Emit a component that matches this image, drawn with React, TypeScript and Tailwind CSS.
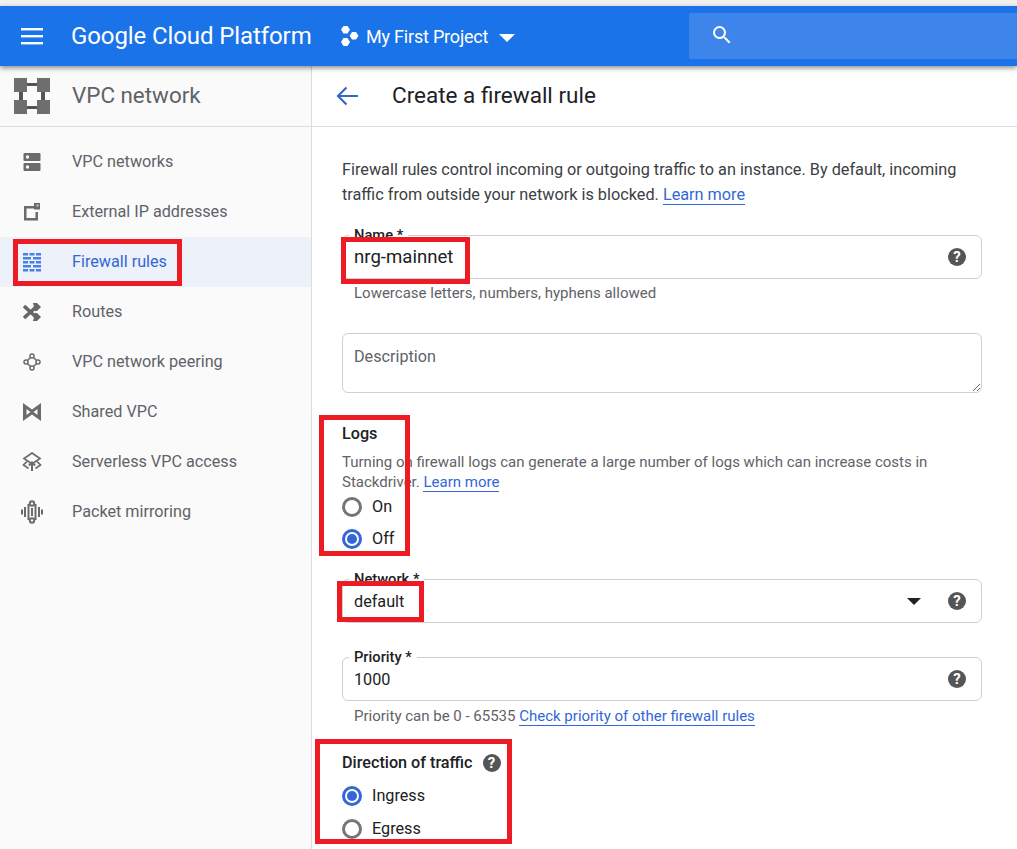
const font = { fontFamily: "Roboto, sans-serif" };

function Menu() {
  return (
    <svg width="24" height="18" viewBox="0 0 24 18" fill="#fff">
      <rect x="1" y="1" width="22" height="2.4" />
      <rect x="1" y="8" width="22" height="2.4" />
      <rect x="1" y="15" width="22" height="2.4" />
    </svg>
  );
}

function Hexes() {
  return (
    <svg width="20" height="22" viewBox="0 0 20 22" fill="#fff">
      <path d="M3.500 1h4L10 4.500 7.500 8.500h-4L1 4.500z" />
      <path d="M12 7h4l2.500 3.700L16 14.500h-4l-2.300-3.800z" />
      <path d="M3.500 13h4l2.500 4-2.500 4h-4L1 17z" />
    </svg>
  );
}

function SearchIcon() {
  return (
    <svg width="24" height="24" viewBox="0 0 24 24" fill="#fff">
      <path d="M15.500 14h-.79l-.28-.27A6.471 6.471 0 0 0 16 9.500 6.500 6.500 0 1 0 9.500 16c1.610 0 3.090-.59 4.230-1.570l.27.28v.79l5 4.990L20.490 19l-4.990-5zm-6 0C7.010 14 5 11.990 5 9.500S7.010 5 9.500 5 14 7.010 14 9.500 11.990 14 9.500 14z" />
    </svg>
  );
}

function VpcLogo() {
  return (
    <svg width="36" height="36" viewBox="0 0 36 36" fill="#6e6e6e">
      <rect x="0" y="0" width="13" height="14" />
      <rect x="23" y="0" width="13" height="14" />
      <rect x="0" y="22" width="13" height="14" />
      <rect x="23" y="22" width="13" height="14" />
      <rect x="13" y="5" width="10" height="3" fill="#555" />
      <rect x="13" y="28" width="10" height="3" fill="#555" />
      <rect x="5" y="14" width="4" height="8" fill="#555" />
      <rect x="27" y="14" width="4" height="8" fill="#555" />
    </svg>
  );
}

function NetworksIcon() {
  return (
    <svg width="18" height="20" viewBox="0 0 18 20" fill="#6b6b6b">
      <rect x="0.500" y="1" width="17" height="8" rx="1" />
      <rect x="0.500" y="11" width="17" height="8" rx="1" />
      <circle cx="4.500" cy="5" r="1.700" fill="#fafafa" />
      <circle cx="4.500" cy="15" r="1.700" fill="#fafafa" />
    </svg>
  );
}

function ExternalIpIcon() {
  return (
    <svg width="18" height="20" viewBox="0 0 18 20" fill="#6b6b6b">
      <path d="M1 4h10v2.500H3.500V16h9V10H15v8.500H1z" />
      <rect x="11" y="1" width="6" height="6.500" />
      <rect x="13.500" y="2.500" width="2" height="2" fill="#c9c9c9" />
    </svg>
  );
}

function FirewallIcon() {
  return (
    <svg width="18" height="20" viewBox="0 0 18 20" fill="#4a7fe6">
      <rect x="0" y="1" width="5" height="2.500" />
      <rect x="6.500" y="1" width="5" height="2.500" />
      <rect x="13" y="1" width="5" height="2.500" />
      <rect x="0" y="5" width="8" height="2.500" />
      <rect x="10" y="5" width="8" height="2.500" />
      <rect x="0" y="9" width="5" height="2.500" />
      <rect x="6.500" y="9" width="5" height="2.500" />
      <rect x="13" y="9" width="5" height="2.500" />
      <rect x="0" y="13" width="8" height="2.500" />
      <rect x="10" y="13" width="8" height="2.500" />
      <rect x="0" y="17" width="5" height="2.500" />
      <rect x="6.500" y="17" width="5" height="2.500" />
      <rect x="13" y="17" width="5" height="2.500" />
    </svg>
  );
}

function RoutesIcon() {
  return (
    <svg width="18" height="18" viewBox="0 0 18 18" fill="none" stroke="#666" strokeWidth="3.600">
      <path d="M1 3l12 11M1 15L13 4" />
      <path d="M10 0h4l4 4-4 4h-2zM10 18h4l4-4-4-4h-2z" fill="#666" stroke="none" />
    </svg>
  );
}

function PeeringIcon() {
  return (
    <svg width="18" height="18" viewBox="0 0 18 18" fill="none" stroke="#6b6b6b" strokeWidth="1.500">
      <circle cx="9" cy="3" r="2" />
      <circle cx="9" cy="15" r="2" />
      <circle cx="3" cy="9" r="2" />
      <circle cx="15" cy="9" r="2" />
      <path d="M7.500 4.500L4.500 7.500M10.500 4.500l3 3M4.500 10.500l3 3M13.500 10.500l-3 3" />
    </svg>
  );
}

function SharedIcon() {
  return (
    <svg width="18" height="18" viewBox="0 0 18 18" fill="#6b6b6b">
      <path d="M0 0l9 6.500L18 0v18l-9-6.500L0 18zM3.500 6v6l4-3zM14.500 6l-4 3 4 3z" fillRule="evenodd" />
    </svg>
  );
}

function ServerlessIcon() {
  return (
    <svg width="20" height="20" viewBox="0 0 20 20" fill="none" stroke="#6b6b6b" strokeWidth="1.700">
      <path d="M10 1l8 5.500-8 5.500-8-5.500z" />
      <path d="M5 9.500l-3.500 3.500 5 3.500M15 9.500l3.500 3.500-5 3.500" />
      <path d="M10 19v-8M7 13.500l3-3 3 3" strokeWidth="2" />
    </svg>
  );
}

function MirroringIcon() {
  return (
    <svg width="22" height="24" viewBox="0 0 22 24" fill="none" stroke="#6b6b6b" strokeWidth="2">
      <circle cx="11" cy="3.500" r="2.200" />
      <circle cx="11" cy="20.500" r="2.200" />
      <path d="M11 8v8M7.500 4v16M14.500 4v16M4 7v10M18 7v10M1 9.500v5M21 9.500v5" />
    </svg>
  );
}

function BackArrow() {
  return (
    <svg width="22" height="20" viewBox="0 0 22 20" fill="none" stroke="#3367d6" strokeWidth="2.200">
      <path d="M22 10H2M10.500 1.500L2 10l8.500 8.500" />
    </svg>
  );
}

function HelpIcon() {
  return (
    <span className="flex h-[18px] w-[18px] items-center justify-center rounded-full bg-[#555] text-[15px] font-bold leading-none text-white">
      ?
    </span>
  );
}

function Radio({ label, checked }: { label: string; checked?: boolean }) {
  return (
    <div className="flex h-[32px] items-center gap-[10px]">
      <span
        className={`flex h-[20px] w-[20px] items-center justify-center rounded-full border-[3px] ${
          checked ? "border-[#3367d6]" : "border-[#757575]"
        }`}
      >
        {checked && <span className="h-[10px] w-[10px] rounded-full bg-[#3367d6]" />}
      </span>
      <span className="text-[16.200px] text-[#202124]">{label}</span>
    </div>
  );
}

function Field({
  label,
  value,
  caret,
  large,
  className,
}: {
  label: string;
  value: string;
  caret?: boolean;
  large?: boolean;
  className: string;
}) {
  return (
    <div className={`relative flex h-[44px] w-[640px] items-center rounded-[6px] border border-[#cfcfcf] pl-[11px] pr-[15px] ${className}`}>
      <span className="absolute left-[6px] top-[-11px] bg-white px-[5px] text-[14.700px] font-medium leading-[20px] text-[#202124]">
        {label}
      </span>
      <span className={`flex-1 pt-[2px] text-[#202124] ${large ? "text-[18.600px]" : "text-[16.200px]"}`}>{value}</span>
      {caret && <span className="mr-[27px] h-0 w-0 border-x-[7px] border-t-[7px] border-x-transparent border-t-[#202124]" />}
      <HelpIcon />
    </div>
  );
}

const navItems = [
  { label: "VPC networks", icon: <NetworksIcon /> },
  { label: "External IP addresses", icon: <ExternalIpIcon /> },
  { label: "Firewall rules", icon: <FirewallIcon />, active: true },
  { label: "Routes", icon: <RoutesIcon /> },
  { label: "VPC network peering", icon: <PeeringIcon /> },
  { label: "Shared VPC", icon: <SharedIcon /> },
  { label: "Serverless VPC access", icon: <ServerlessIcon /> },
  { label: "Packet mirroring", icon: <MirroringIcon /> },
];

export default function App() {
  return (
    <div className="relative flex h-[849px] w-[1017px] flex-col overflow-hidden bg-white" style={font}>
      <div className="h-[6px] bg-[#f1f1f1]" />

      {/* top bar */}
      <header className="relative z-10 flex h-[60px] items-center bg-[#1a73e8] shadow-[0_2px_5px_rgba(0,0,0,0.45)]">
        <div className="ml-[20px] flex w-[24px]">
          <Menu />
        </div>
        <span className="ml-[27px] w-[241px] whitespace-nowrap text-[24px] tracking-[-0.1px] text-white">
          Google Cloud Platform
        </span>
        <div className="ml-[28px] flex w-[349px] items-center">
          <Hexes />
          <span className="ml-[6px] text-[18px] tracking-[-0.2px] text-white">My First Project</span>
          <span className="ml-[11px] mt-[3px] h-0 w-0 border-x-[8px] border-t-[8px] border-x-transparent border-t-white" />
        </div>
        <div className="flex h-[46px] flex-1 items-center rounded-l-[2px] bg-[#3d84eb] pb-[2px] pl-[21px]">
          <SearchIcon />
        </div>
      </header>

      <div className="flex flex-1">
        {/* sidebar */}
        <aside className="w-[312px] border-r border-[#dadce0] bg-[#fafafa]">
          <div className="flex h-[61px] items-center border-b border-[#dadce0] pl-[14px]">
            <VpcLogo />
            <span className="mb-[1px] ml-[22px] text-[22.400px] text-[#5f6368]">VPC network</span>
          </div>
          <nav className="pt-[10px]">
            {navItems.map((item) => (
              <div
                key={item.label}
                className={`flex h-[50px] items-center ${item.active ? "bg-[#edf1fa] text-[#3367d6]" : "text-[#5f6368]"}`}
              >
                <div className="flex w-[64px] justify-center">{item.icon}</div>
                <span className="ml-[8px] text-[16.200px]">{item.label}</span>
              </div>
            ))}
          </nav>
        </aside>

        {/* main */}
        <main className="flex-1">
          <div className="flex h-[61px] items-center border-b border-[#dadce0] pl-[24px]">
            <BackArrow />
            <h1 className="ml-[34px] text-[22.500px] text-[#202124]">Create a firewall rule</h1>
          </div>
          <div className="pl-[30px] pt-[30px]">
            <p className="w-[640px] text-[16.250px] leading-[25px] text-[#3c4043]">
              Firewall rules control incoming or outgoing traffic to an instance. By default, incoming
              traffic from outside your network is blocked.{" "}
              <a className="border-b border-[#3367d6] text-[#3367d6]">Learn more</a>
            </p>

            <Field label="Name *" value="nrg-mainnet" large className="mt-[28px]" />
            <p className="mt-[4px] pl-[12px] text-[15px] leading-[20px] text-[#5f6368]">
              Lowercase letters, numbers, hyphens allowed
            </p>

            <textarea
              placeholder="Description"
              className="mt-[30px] block h-[60px] w-[640px] rounded-[6px] border border-[#cfcfcf] px-[11px] py-[11px] text-[16.200px] leading-[24px] outline-none placeholder:text-[#5f6368]"
            />

            <h2 className="mt-[31px] text-[16.200px] font-medium leading-[20px] text-[#202124]">Logs</h2>
            <p className="mt-[8px] w-[640px] text-[15px] leading-[20px] text-[#5f6368]">
              Turning on firewall logs can generate a large number of logs which can increase costs in
              Stackdriver.{" "}
              <a className="border-b border-[#3367d6] text-[#3367d6]">Learn more</a>
            </p>
            <div className="-mt-[1px]">
              <Radio label="On" />
            </div>
            <Radio label="Off" checked />

            <Field label="Network *" value="default" caret className="mt-[24px]" />
            <Field label="Priority *" value="1000" className="mt-[34px]" />
            <p className="mt-[5px] pl-[12px] text-[15px] leading-[20px] text-[#5f6368]">
              Priority can be 0 - 65535{" "}
              <a className="border-b border-[#3367d6] text-[#3367d6]">Check priority of other firewall rules</a>
            </p>

            <div className="mt-[27px] flex items-center gap-[10px]">
              <h2 className="text-[16.200px] font-medium leading-[20px] text-[#202124]">Direction of traffic</h2>
              <HelpIcon />
            </div>
            <div className="mt-[7px]">
              <Radio label="Ingress" checked />
              <div className="mt-[1px]">
                <Radio label="Egress" />
              </div>
            </div>
          </div>
        </main>
      </div>

      {/* red annotation boxes drawn over the screenshot */}
      <div className="absolute left-[13px] top-[239px] z-20 h-[47px] w-[169px] border-[5px] border-[#ed1c24]" />
      <div className="absolute left-[341px] top-[237px] z-20 h-[47px] w-[129px] border-[5px] border-[#ed1c24]" />
      <div className="absolute left-[319px] top-[415px] z-20 h-[141px] w-[91px] border-[5px] border-[#ed1c24]" />
      <div className="absolute left-[337px] top-[581px] z-20 h-[41px] w-[87px] border-[5px] border-[#ed1c24]" />
      <div className="absolute left-[315px] top-[739px] z-20 h-[105px] w-[197px] border-[5px] border-[#ed1c24]" />
    </div>
  );
}
